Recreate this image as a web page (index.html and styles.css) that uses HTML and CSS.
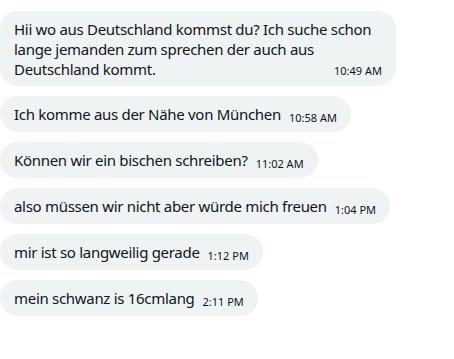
FILE: index.html
```html
<!DOCTYPE html>
<html lang="de">
<head>
<meta charset="utf-8">
<link rel="stylesheet" href="styles.css">
</head>
<body>
<div class="chat">
  <div class="bubble wide"><span class="text">Hii wo aus Deutschland kommst du? Ich suche schon lange jemanden zum sprechen der auch aus Deutschland kommt.</span><span class="time float">10:49 AM</span></div>
  <div class="bubble"><span class="text">Ich komme aus der Nähe von München</span><span class="time">10:58 AM</span></div>
  <div class="bubble"><span class="text">Können wir ein bischen schreiben?</span><span class="time">11:02 AM</span></div>
  <div class="bubble"><span class="text">also müssen wir nicht aber würde mich freuen</span><span class="time">1:04 PM</span></div>
  <div class="bubble"><span class="text">mir ist so langweilig gerade</span><span class="time">1:12 PM</span></div>
  <div class="bubble"><span class="text">mein schwanz is 16cmlang</span><span class="time">2:11 PM</span></div>
</div>
</body>
</html>
```
FILE: styles.css
```css
html, body {
  margin: 0;
  padding: 0;
  background: #ffffff;
}
body {
  font-family: "Segoe UI", "Noto Sans", "Open Sans", sans-serif;
  color: #0f1419;
}
.chat {
  display: flex;
  flex-direction: column;
  align-items: flex-start;
  gap: 10px;
  padding-top: 11px;
}
.bubble {
  background: #eff3f4;
  border-radius: 18px;
  padding: 8px 14px;
  font-size: 15px;
  line-height: 20px;
  height: 20px;
}
.bubble.wide {
  width: 368px;
  height: auto;
  padding-bottom: 7px;
}
.text {
  letter-spacing: -0.3px;
}
.time {
  font-size: 11px;
  line-height: 0;
  margin-left: 8px;
  position: relative;
  top: 2px;
}
.time.float {
  float: right;
  line-height: 20px;
}
```
